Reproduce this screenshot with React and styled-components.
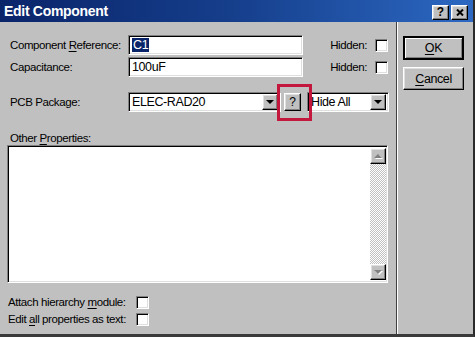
import React from 'react';
import styled, { createGlobalStyle, css } from 'styled-components';

const GlobalStyle = createGlobalStyle`
  html, body {
    margin: 0;
    padding: 0;
    background: #c0c0c0;
  }
  body {
    font-family: "Liberation Sans", Arial, sans-serif;
    font-size: 11.5px;
    letter-spacing: -0.4px;
    color: #000;
  }
`;

const raised = css`
  background: #c0c0c0;
  border: 1px solid;
  border-color: #fff #000 #000 #fff;
  box-shadow: inset -1px -1px #808080, inset 1px 1px #dfdfdf;
  box-sizing: border-box;
`;

const sunken = css`
  background: #fff;
  border: 1px solid;
  border-color: #808080 #fff #fff #808080;
  box-shadow: inset 1px 1px #000, inset -1px -1px #dfdfdf;
  box-sizing: border-box;
`;

const Window = styled.div`
  width: 475px;
  height: 337px;
  box-sizing: border-box;
  display: flex;
  flex-direction: column;
  background: #c0c0c0;
  border-right: 2px solid #2a2a2a;
  border-bottom: 3px solid #3a3a3a;
  overflow: hidden;
`;

const TitleBar = styled.div`
  height: 22px;
  flex: none;
  display: flex;
  align-items: center;
  justify-content: space-between;
  padding: 0 5px 0 4px;
  background: linear-gradient(90deg, #0a246a 0%, #163f8c 50%, #2c68c2 100%);
  color: #fff;
`;

const Title = styled.span`
  font-weight: bold;
  font-size: 14px;
  letter-spacing: -0.3px;
`;

const TitleButtons = styled.div`
  display: flex;
  gap: 2px;
  margin-top: 2px;
`;

const TitleButton = styled.div`
  ${raised};
  width: 17px;
  height: 15px;
  display: flex;
  align-items: center;
  justify-content: center;
  font-weight: bold;
  font-size: 12px;
  letter-spacing: 0;
  line-height: 1;
  color: #000;
`;

const Body = styled.div`
  flex: 1;
  display: flex;
`;

const Main = styled.div`
  width: 396px;
  flex: none;
  display: flex;
  flex-direction: column;
  padding-top: 13px;
  box-sizing: border-box;
`;

const Divider = styled.div`
  width: 2px;
  flex: none;
  box-sizing: border-box;
  border-left: 1px solid #404040;
  border-right: 1px solid #fff;
`;

const Side = styled.div`
  flex: 1;
  display: flex;
  flex-direction: column;
  gap: 7px;
  padding: 14px 0 0 5px;
`;

const PushButton = styled.div`
  ${raised};
  width: 61px;
  height: ${(p) => (p.$default ? 24 : 23)}px;
  display: flex;
  align-items: center;
  justify-content: center;
  font-size: 12.5px;
  ${(p) =>
    p.$default &&
    css`
      border: 2px solid #000;
      box-shadow: inset 1px 1px #fff, inset -1px -1px #808080;
    `}
`;

const Row = styled.div`
  display: flex;
  align-items: center;
  height: ${(p) => p.$h || 20}px;
  margin-top: ${(p) => p.$mt || 0}px;
  padding-left: ${(p) => p.$pl || 10}px;
  padding-right: 8px;
`;

const Label = styled.span`
  width: ${(p) => p.$w}px;
  flex: none;
  white-space: nowrap;
`;

const TextField = styled.div`
  ${sunken};
  width: ${(p) => p.$w}px;
  height: 20px;
  display: flex;
  align-items: center;
  padding-left: 3px;
  white-space: nowrap;
  font-size: 12.5px;
`;

const Selected = styled.span`
  background: #0a246a;
  color: #fff;
  padding: 0 1px;
`;

const Hidden = styled.div`
  margin-left: auto;
  display: flex;
  align-items: center;
  gap: 8px;
`;

const CheckBox = styled.div`
  ${sunken};
  width: 13px;
  height: 13px;
  flex: none;
`;

const Combo = styled.div`
  ${sunken};
  width: ${(p) => p.$w}px;
  height: 20px;
  display: flex;
  align-items: center;
  padding: 2px 2px 2px 3px;
  flex: none;
  font-size: 12.5px;
`;

const ComboText = styled.span`
  flex: 1;
  white-space: nowrap;
`;

const ArrowButton = styled.div`
  ${raised};
  width: 16px;
  height: 16px;
  display: flex;
  align-items: center;
  justify-content: center;
`;

const Triangle = styled.span`
  width: 0;
  height: 0;
  border-left: 4px solid transparent;
  border-right: 4px solid transparent;
  ${(p) =>
    p.$up
      ? css`border-bottom: 4px solid ${p.$c || '#000'};`
      : css`border-top: 4px solid ${p.$c || '#000'};`}
  ${(p) => p.$disabled && css`filter: drop-shadow(1px 1px 0 #fff);`}
`;

const HelpWrap = styled.div`
  position: relative;
  margin: 0 6px 0 3px;
`;

const HelpButton = styled.div`
  ${raised};
  width: 17px;
  height: 18px;
  display: flex;
  align-items: center;
  justify-content: center;
  font-size: 12px;
`;

const Highlight = styled.div`
  position: absolute;
  left: -7px;
  top: -9px;
  width: 35px;
  height: 37px;
  box-sizing: border-box;
  border: 3px solid #c4173d;
  pointer-events: none;
`;

const Memo = styled.div`
  ${sunken};
  margin-left: 7px;
  width: 381px;
  height: 138px;
  display: flex;
  justify-content: flex-end;
  padding: 2px 1px 2px 2px;
`;

const ScrollBar = styled.div`
  width: 16px;
  display: flex;
  flex-direction: column;
`;

const ScrollTrack = styled.div`
  flex: 1;
  background: repeating-conic-gradient(#c0c0c0 0 25%, #fff 0 50%) 0 0 / 2px 2px;
`;

const Accel = styled.u`
  text-decoration: underline;
  text-underline-offset: 2px;
`;

const CloseIcon = () => (
  <svg width="8" height="7" viewBox="0 0 8 7">
    <path d="M1 0.5 L7 6.5 M7 0.5 L1 6.5" stroke="#000" strokeWidth="2" />
  </svg>
);

const App = () => (
  <>
    <GlobalStyle />
    <Window>
      <TitleBar>
        <Title>Edit Component</Title>
        <TitleButtons>
          <TitleButton>?</TitleButton>
          <TitleButton>
            <CloseIcon />
          </TitleButton>
        </TitleButtons>
      </TitleBar>
      <Body>
        <Main>
          <Row>
            <Label $w={118}>
              Component <Accel>R</Accel>eference:
            </Label>
            <TextField $w={175}>
              <Selected>C1</Selected>
            </TextField>
            <Hidden>
              Hidden:
              <CheckBox />
            </Hidden>
          </Row>
          <Row $mt={2}>
            <Label $w={118}>Capacitance:</Label>
            <TextField $w={175}>100uF</TextField>
            <Hidden>
              Hidden:
              <CheckBox />
            </Hidden>
          </Row>
          <Row $mt={15}>
            <Label $w={118}>PCB Package:</Label>
            <Combo $w={153}>
              <ComboText>ELEC-RAD20</ComboText>
              <ArrowButton>
                <Triangle />
              </ArrowButton>
            </Combo>
            <HelpWrap>
              <HelpButton>?</HelpButton>
              <Highlight />
            </HelpWrap>
            <Combo $w={82}>
              <ComboText>Hide All</ComboText>
              <ArrowButton>
                <Triangle />
              </ArrowButton>
            </Combo>
          </Row>
          <Row $mt={18} $h={15}>
            <Label $w={200}>
              Other <Accel>P</Accel>roperties:
            </Label>
          </Row>
          <Memo>
            <ScrollBar>
              <ArrowButton>
                <Triangle $up $c="#808080" $disabled />
              </ArrowButton>
              <ScrollTrack />
              <ArrowButton>
                <Triangle $c="#808080" $disabled />
              </ArrowButton>
            </ScrollBar>
          </Memo>
          <Row $mt={12} $h={14} $pl={8}>
            <Label $w={128}>
              Attach hierarchy <Accel>m</Accel>odule:
            </Label>
            <CheckBox />
          </Row>
          <Row $mt={3} $h={14} $pl={8}>
            <Label $w={128}>
              Edit <Accel>a</Accel>ll properties as text:
            </Label>
            <CheckBox />
          </Row>
        </Main>
        <Divider />
        <Side>
          <PushButton $default>
            <Accel>O</Accel>K
          </PushButton>
          <PushButton>
            <Accel>C</Accel>ancel
          </PushButton>
        </Side>
      </Body>
    </Window>
  </>
);

export default App;
